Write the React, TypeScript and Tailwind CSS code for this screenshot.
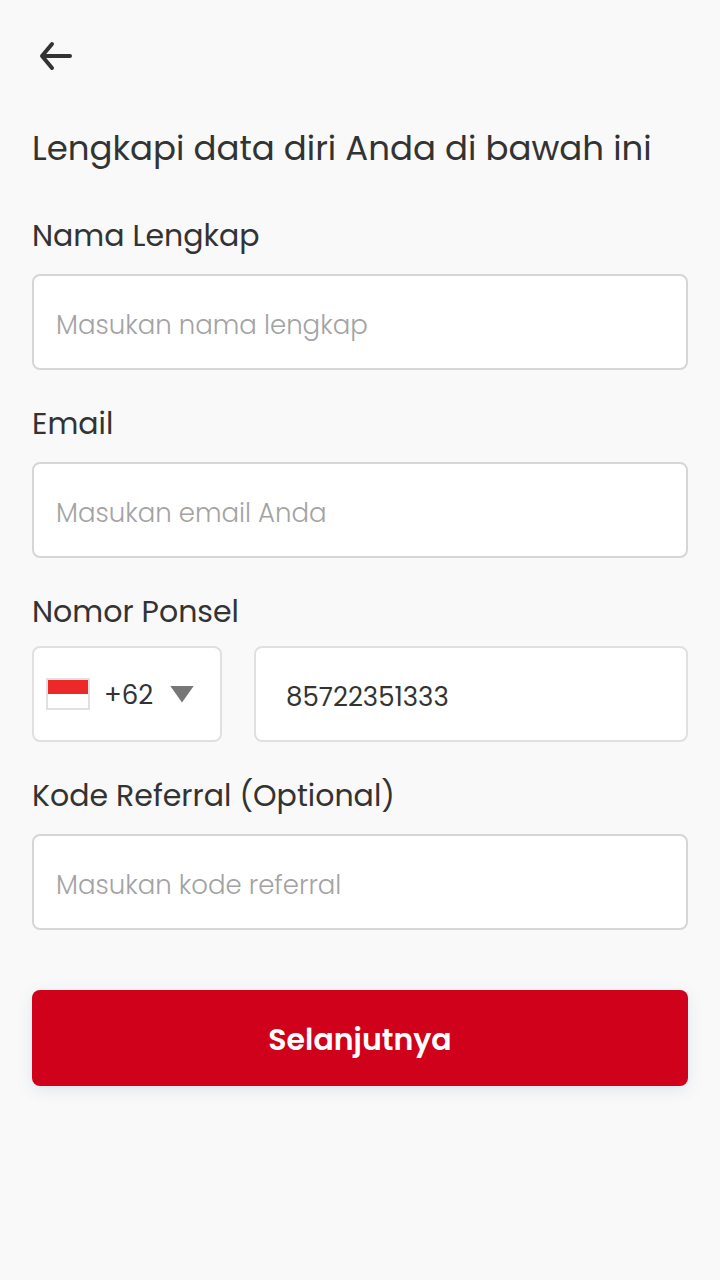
import type { ReactNode } from "react";

const fieldClass =
  "h-24 w-full min-w-0 rounded-lg border-2 border-[#d6d6d6] bg-white px-[22px] pt-1.5 text-[26px] text-[#333333] outline-none placeholder:font-light placeholder:text-[#a3a3a3] focus:border-[#8f8f8f]";

function Label({ htmlFor, children }: { htmlFor: string; children: ReactNode }) {
  return (
    <label htmlFor={htmlFor} className="block text-[30px] leading-9">
      {children}
    </label>
  );
}

type TextFieldProps = {
  id: string;
  label: string;
  placeholder: string;
  type?: string;
};

function TextField({ id, label, placeholder, type = "text" }: TextFieldProps) {
  return (
    <div className="flex flex-col gap-5">
      <Label htmlFor={id}>{label}</Label>
      <input
        id={id}
        name={id}
        type={type}
        placeholder={placeholder}
        className={fieldClass}
      />
    </div>
  );
}

function PhoneField() {
  return (
    <div className="flex flex-col gap-4">
      <Label htmlFor="phone">Nomor Ponsel</Label>
      <div className="flex gap-8">
        <div className="relative w-[190px] shrink-0">
          <select
            aria-label="Kode negara"
            defaultValue="+62"
            className="h-24 w-full appearance-none rounded-lg border-2 border-[#e0e0e0] bg-white pt-0.5 pl-[70px] text-[26px] text-[#333333] outline-none"
          >
            <option value="+62">+62</option>
          </select>
          <svg
            className="pointer-events-none absolute top-8 left-3.5"
            width="44"
            height="32"
            viewBox="0 0 44 32"
            aria-hidden="true"
          >
            <rect x="1" y="1" width="42" height="30" fill="#ffffff" stroke="#e0e0e0" strokeWidth="2" />
            <rect x="2" y="2" width="40" height="14" fill="#ed2828" />
          </svg>
          <svg
            className="pointer-events-none absolute top-10 right-7"
            width="24"
            height="17"
            viewBox="0 0 24 17"
            aria-hidden="true"
          >
            <path d="M0 -0.4H24L12 16.4Z" fill="#777777" />
          </svg>
        </div>
        <input
          id="phone"
          name="phone"
          type="tel"
          defaultValue="85722351333"
          className="h-24 w-full min-w-0 flex-1 rounded-lg border-2 border-[#e0e0e0] bg-white px-[30px] pt-1.5 text-[26px] text-[#333333] outline-none"
        />
      </div>
    </div>
  );
}

export default function App() {
  return (
    <main className="min-h-screen bg-[#f9f9f9] px-8 pt-8 pb-12 font-['Poppins','Inter',sans-serif] text-[#333333]">
      <button type="button" aria-label="Kembali" className="block size-12">
        <svg width="48" height="48" viewBox="0 0 48 48" fill="none" aria-hidden="true">
          <path
            d="M38 24H10M20 12L10 24L20 36"
            stroke="#333333"
            strokeWidth="4"
            strokeLinecap="round"
            strokeLinejoin="round"
          />
        </svg>
      </button>

      <h1 className="mt-11 text-[34px] leading-[48px]">Lengkapi data diri Anda di bawah ini</h1>

      <form className="mt-[46px] flex flex-col gap-9" onSubmit={(event) => event.preventDefault()}>
        <TextField id="name" label="Nama Lengkap" placeholder="Masukan nama lengkap" />
        <TextField id="email" label="Email" placeholder="Masukan email Anda" type="email" />
        <PhoneField />
        <TextField id="referral" label="Kode Referral (Optional)" placeholder="Masukan kode referral" />
        <button
          type="submit"
          className="mt-6 h-24 w-full rounded-lg bg-[#d0021b] pt-0.5 text-[30px] font-semibold text-white shadow-[0_4px_16px_rgba(52,89,123,0.12)]"
        >
          Selanjutnya
        </button>
      </form>
    </main>
  );
}
